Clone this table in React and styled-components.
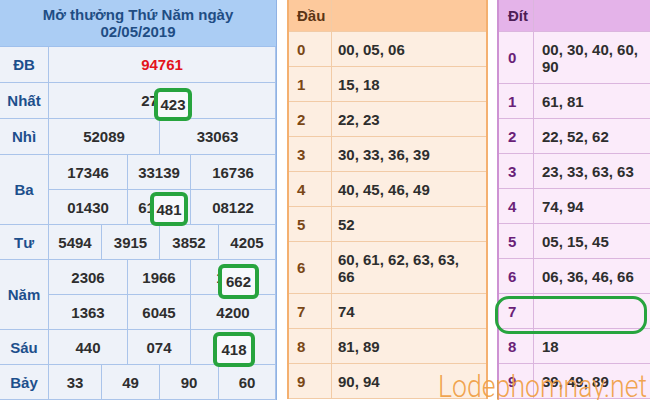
import React from 'react';
import styled, { createGlobalStyle } from 'styled-components';

const GlobalStyle = createGlobalStyle`
  html, body { margin: 0; padding: 0; background: #fff; }
  body {
    width: 650px; height: 400px; overflow: hidden;
    font-family: "Liberation Sans", Arial, sans-serif;
  }
`;

const Page = styled.div`
  position: relative;
  display: flex;
  align-items: flex-start;
  width: 650px;
  height: 400px;
  overflow: hidden;
  font-family: "Liberation Sans", Arial, sans-serif;
  font-weight: 700;
  font-size: 15px;
`;

/* ---------- result table (left) ---------- */
const ResultTable = styled.div`
  flex: none;
  width: 277px;
  box-sizing: border-box;
  border-right: 1px solid #8fb2e4;
  background: #eef2f9;
`;

const Title = styled.div`
  height: 47px;
  box-sizing: border-box;
  padding-top: 6px;
  background: #abcdf4;
  color: #1f4d84;
  text-align: center;
  line-height: 17px;
  border-bottom: 1px solid #9fc0ec;
`;

const Group = styled.div`
  display: grid;
  grid-template-columns: 49px ${p => p.$cols};
  grid-auto-rows: ${p => p.$h}px;
`;

const Label = styled.div`
  grid-row: span ${p => p.$span};
  display: flex;
  align-items: center;
  justify-content: center;
  box-sizing: border-box;
  color: #1d4f8c;
  border-right: 1px solid #aac4ea;
  border-bottom: 1px solid #aac4ea;
`;

const Num = styled.div`
  display: flex;
  align-items: center;
  justify-content: center;
  box-sizing: border-box;
  color: ${p => (p.$red ? '#e3141b' : '#2e2e2e')};
  border-right: 1px solid #aac4ea;
  border-bottom: 1px solid #aac4ea;
`;

/* ---------- loto tables (middle / right) ---------- */
const orange = {
  head: '#fdc99c', body: '#fdeee1', line: '#f2cba6', edge: '#f4b070',
  key: '#7a4716', title: '#5b3514', keyW: 43, keyPad: 8, valPad: 6, valPadR: 16,
  width: 201, gap: 10,
};
const purple = {
  head: '#e4b3e9', body: '#fbebfa', line: '#dbb5de', edge: '#cd92d3',
  key: '#6a1f78', title: '#4c1c55', keyW: 35, keyPad: 9, valPad: 8, valPadR: 8,
  width: 156, gap: 9,
};

const LotoTable = styled.div`
  flex: none;
  width: ${p => p.$t.width}px;
  margin-left: ${p => p.$t.gap}px;
  box-sizing: border-box;
  border-left: 2px solid ${p => p.$t.edge};
  border-right: 2px solid ${p => p.$t.edge};
  background: ${p => p.$t.body};
`;

const LotoRow = styled.div`
  display: grid;
  grid-template-columns: ${p => p.$t.keyW}px 1fr;
  height: ${p => (p.$head ? 32 : p.$tall ? 52 : 35)}px;
  box-sizing: border-box;
  border-bottom: 1px solid ${p => p.$t.line};
  background: ${p => (p.$head ? p.$t.head : 'transparent')};
`;

const LotoKey = styled.div`
  display: flex;
  align-items: center;
  box-sizing: border-box;
  padding-left: ${p => p.$t.keyPad}px;
  border-right: 1px solid ${p => p.$t.line};
  color: ${p => (p.$head ? p.$t.title : p.$t.key)};
`;

const LotoVals = styled.div`
  display: flex;
  align-items: center;
  padding: 0 ${p => p.$t.valPadR}px 0 ${p => p.$t.valPad}px;
  color: #2e2e2e;
  line-height: 17px;
`;

/* ---------- overlays ---------- */
const Ring = styled.div`
  position: absolute;
  left: ${p => p.$x}px;
  top: ${p => p.$y}px;
  width: ${p => p.$w}px;
  height: ${p => p.$h}px;
  box-sizing: border-box;
  display: flex;
  align-items: center;
  justify-content: center;
  border: ${p => p.$t || 4}px solid #27a43e;
  border-radius: ${p => p.$r || 6}px;
  background: ${p => (p.$fill ? '#f7f9fc' : 'transparent')};
  color: #2e2e2e;
  pointer-events: none;
`;

const Watermark = styled.div`
  position: absolute;
  left: 438px;
  top: 371px;
  font-family: Roboto, "Liberation Sans", sans-serif;
  font-weight: 300;
  font-size: 31px;
  line-height: 31px;
  white-space: nowrap;
  color: rgba(240, 160, 70, 0.95);
  transform: scaleX(0.86);
  transform-origin: left top;
  pointer-events: none;
`;

const groups = [
  { label: 'ĐB', h: 36, cols: '227px', rows: [['94761']], red: true },
  { label: 'Nhất', h: 36, cols: '227px', rows: [['27423']] },
  { label: 'Nhì', h: 36, cols: '111px 116px', rows: [['52089', '33063']] },
  { label: 'Ba', h: 35, cols: '79px 63px 85px', rows: [['17346', '33139', '16736'], ['01430', '61481', '08122']] },
  { label: 'Tư', h: 35, cols: '53px 58px 59px 57px', rows: [['5494', '3915', '3852', '4205']] },
  { label: 'Năm', h: 35, cols: '79px 63px 85px', rows: [['2306', '1966', '1662'], ['1363', '6045', '4200']] },
  { label: 'Sáu', h: 35, cols: '79px 63px 85px', rows: [['440', '074', '418']] },
  { label: 'Bảy', h: 35, cols: '53px 58px 59px 57px', rows: [['33', '49', '90', '60']] },
];

const dau = [
  '00, 05, 06', '15, 18', '22, 23', '30, 33, 36, 39', '40, 45, 46, 49',
  '52', '60, 61, 62, 63, 63, 66', '74', '81, 89', '90, 94',
];
const dit = [
  '00, 30, 40, 60, 90', '61, 81', '22, 52, 62', '23, 33, 63, 63', '74, 94',
  '05, 15, 45', '06, 36, 46, 66', '', '18', '39, 49, 89',
];

const rings = [
  { x: 154, y: 88, w: 38, h: 33, text: '423' },
  { x: 150, y: 192, w: 38, h: 34, text: '481' },
  { x: 218, y: 264, w: 41, h: 35, text: '662' },
  { x: 213, y: 332, w: 42, h: 35, text: '418' },
];

function Loto({ theme, title, values, tallIndex }) {
  return (
    <LotoTable $t={theme}>
      <LotoRow $t={theme} $head>
        <LotoKey $t={theme} $head>{title}</LotoKey>
        <LotoVals $t={theme} />
      </LotoRow>
      {values.map((v, i) => (
        <LotoRow key={i} $t={theme} $tall={i === tallIndex}>
          <LotoKey $t={theme}>{i}</LotoKey>
          <LotoVals $t={theme}>{v}</LotoVals>
        </LotoRow>
      ))}
    </LotoTable>
  );
}

export default function App() {
  return (
    <>
      <GlobalStyle />
      <Page>
        <ResultTable>
          <Title>
            Mở thưởng Thứ Năm ngày
            <br />
            02/05/2019
          </Title>
          {groups.map(g => (
            <Group key={g.label} $cols={g.cols} $h={g.h}>
              <Label $span={g.rows.length}>{g.label}</Label>
              {g.rows.flat().map((n, i) => (
                <Num key={i} $red={g.red}>{n}</Num>
              ))}
            </Group>
          ))}
        </ResultTable>
        <Loto theme={orange} title="Đầu" values={dau} tallIndex={6} />
        <Loto theme={purple} title="Đít" values={dit} tallIndex={0} />

        {rings.map(r => (
          <Ring key={r.text} $x={r.x} $y={r.y} $w={r.w} $h={r.h} $fill>
            {r.text}
          </Ring>
        ))}
        <Ring $x={495} $y={296} $w={152} $h={38} $t={3} $r={14} />
        <Watermark>Lodephomnay.net</Watermark>
      </Page>
    </>
  );
}
